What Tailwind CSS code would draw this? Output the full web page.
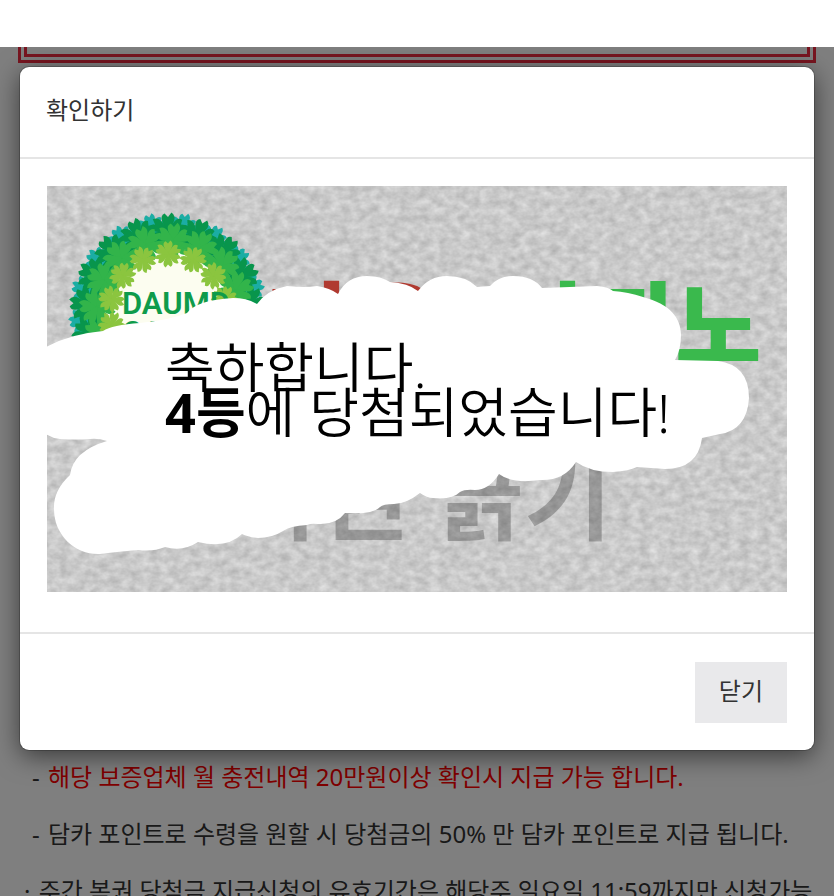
<!DOCTYPE html>
<html lang="ko">
<head>
  <meta charset="UTF-8">
  <meta name="viewport" content="width=device-width, initial-scale=1.0">
  <title>확인하기</title>
  <script src="https://cdn.jsdelivr.net/npm/@tailwindcss/browser@4"></script>
</head>
<body class="flex h-screen flex-col overflow-hidden bg-white font-['Noto_Sans','Noto_Sans_CJK_KR',sans-serif] text-2xl text-[#333]">
  <header class="h-[47px] shrink-0"></header>

  <main class="relative mr-px min-h-0 flex-1 overflow-hidden">
    <div class="mx-[18px] h-4 border-x-9 border-b-9 border-double border-[#f02a40]"></div>
    <ul class="px-8 pt-[685px] leading-[57px] whitespace-nowrap">
      <li><span class="mr-0.5">-</span> <span class="text-[#f00]">해당 보증업체 월 충전내역 20만원이상 확인시 지급 가능 합니다.</span></li>
      <li><span class="mr-0.5">-</span> 담카 포인트로 수령을 원할 시 당첨금의 50% 만 담카 포인트로 지급 됩니다.</li>
      <li class="-ml-2"><span class="mr-0.5">·</span> 주간 복권 당첨금 지급신청의 유효기간은 해당주 일요일 11:59까지만 신청가능</li>
    </ul>

    <div class="absolute inset-0 bg-black/50 px-5 pt-5">
      <div role="dialog" aria-labelledby="modalTitle" class="rounded-[9px] bg-white shadow-[0_0_0_1px_rgba(0,0,0,0.2),0_6px_26px_rgba(0,0,0,0.55)]">
        <div class="border-b-2 border-[#e5e5e5] px-[26px] pt-6 pb-7">
          <h4 id="modalTitle" class="leading-[38px]">확인하기</h4>
        </div>

        <div class="px-[27px] pt-[27px] pb-10">
          <svg viewBox="47 186 740 406" class="block w-full" role="img" aria-label="4등 당첨">
            <defs>
              <filter id="stone" x="0" y="0" width="100%" height="100%" color-interpolation-filters="sRGB">
                <feTurbulence type="fractalNoise" baseFrequency="0.1 0.13" numOctaves="3" seed="8"/>
                <feColorMatrix values="0.22 0 0 0 0.68  0.22 0 0 0 0.68  0.22 0 0 0 0.68  0 0 0 0 1"/>
              </filter>
              <g id="leaf">
                <path id="petal" d="M-1 0L-5 -9Q-7 -14 -3 -16L0 -13L3 -17Q7 -14 5 -9L1 0Z"/>
                <use href="#petal" transform="rotate(60)"/>
                <use href="#petal" transform="rotate(120)"/>
                <use href="#petal" transform="rotate(180)"/>
                <use href="#petal" transform="rotate(240)"/>
                <use href="#petal" transform="rotate(300)"/>
              </g>
            </defs>
            <rect x="47" y="186" width="740" height="406" filter="url(#stone)"/>

            <g font-family="'Noto Sans CJK KR',sans-serif" font-weight="900">
              <text x="266" y="361" font-size="94" fill="#b03a30">다음드</text>
              <text x="502" y="361" font-size="94" fill="#3ab94d">카지노</text>
              <text x="232" y="532" font-size="96" fill="#000" fill-opacity="0.25" font-weight="700">복권 긁기</text>
            </g>

            <!-- logo -->
            <circle cx="168" cy="312" r="72" fill="#fcfdf0"/>
            <g id="wreath"></g>
            <g fill="#0e9b4b" font-family="Roboto,sans-serif" font-weight="600">
              <text x="122" y="314" font-size="31">DAUMD</text>
              <text x="122" y="343" font-size="31">CASINO</text>
            </g>

            <!-- scratched area -->
            <path fill="#fff" d="M46 347Q70 334 103 331Q112 325 140 323Q170 320 187 313Q197 300 233 298Q247 298 257 304Q267 290 287 286Q305 288 317 286Q330 288 338 294Q347 276 367 276Q381 276 390 282Q408 283 418 291Q429 276 447 276Q466 276 477 287L490 286Q499 276 513 276Q533 276 542 288Q570 287 597 286Q609 287 613 291Q628 292 643 297C670 304 681 318 681 335Q681 350 675 360L718 361Q749 365 749 398Q747 430 720 434L702 438Q698 469 665 469L637 467Q629 471 613 472Q590 472 576 462Q564 481 540 480Q512 484 499 474Q489 490 475 490Q465 489 460 492Q452 500 433 498Q427 498 420 493Q406 504 394 504Q383 504 380 507Q373 515 345 513Q336 525 318 524Q311 523 307 525Q290 526 283 531Q272 538 258 538Q248 537 242 534Q227 549 198 542Q183 552 165 547Q153 552 138 550Q115 552 100 554C76 555 54 536 54 509Q53 491 70 475Q73 451 107 441Q98 438 90 439Q77 440 60 439Q52 438 46 434Z"/>
            <g font-family="'Noto Sans','Noto Sans CJK KR',sans-serif" font-size="54" font-weight="350" fill="#000">
              <text x="165" y="388">축하합니다.</text>
              <text x="165" y="433"><tspan font-weight="700">4등</tspan>에 당첨되었습니다!</text>
            </g>
          </svg>
        </div>

        <div class="flex justify-end border-t-2 border-[#e5e5e5] px-[27px] pt-7 pb-[27px]">
          <button type="button" class="bg-[#e9e9eb] px-6 pt-2.5 pb-3.5 leading-[37px]">닫기</button>
        </div>
      </div>
    </div>
  </main>

  <script>
    // rings of leaves around the logo, outermost first
    const rings = [
      { r: 84, n: 17, size: 0.95, fill: '#1bada4', shift: 10 },
      { r: 80, n: 17, size: 1.15, fill: '#08954c', shift: 0 },
      { r: 71, n: 16, size: 1.1, fill: '#32b44a', shift: 4 },
      { r: 58, n: 14, size: 0.8, fill: '#8bc53f', shift: 0 }
    ];
    let leaves = '';
    rings.forEach(ring => {
      for (let i = 0; i < ring.n; i++) {
        const a = i * 360 / ring.n + ring.shift;
        leaves += `<use href="#leaf" fill="${ring.fill}" transform="translate(168 312) rotate(${a}) translate(0 ${-ring.r}) scale(${ring.size})"/>`;
      }
    });
    document.getElementById('wreath').innerHTML = leaves;
  </script>
</body>
</html>
